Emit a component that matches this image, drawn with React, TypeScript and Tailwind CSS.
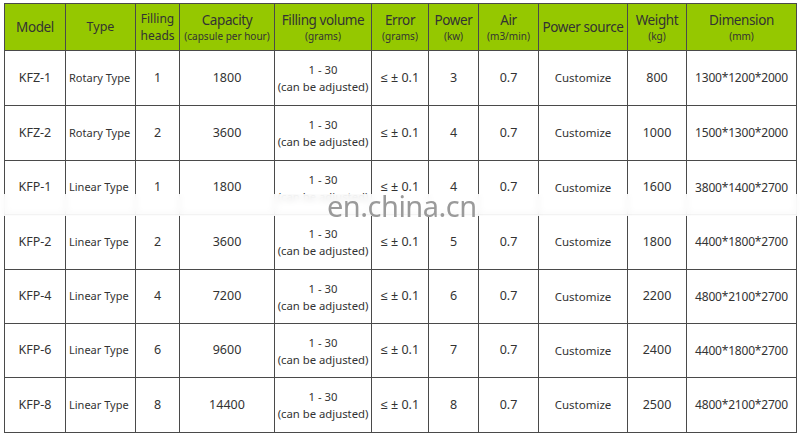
const cols = [61, 70, 44, 95, 97, 57, 50, 60, 89, 59, 110];

type Row = {
  model: string;
  type: string;
  heads: string;
  capacity: string;
  power: string;
  weight: string;
  dim: string;
  h: number;
};

const rows: Row[] = [
  { model: "KFZ-1", type: "Rotary Type", heads: "1", capacity: "1800", power: "3", weight: "800", dim: "1300*1200*2000", h: 55 },
  { model: "KFZ-2", type: "Rotary Type", heads: "2", capacity: "3600", power: "4", weight: "1000", dim: "1500*1300*2000", h: 55 },
  { model: "KFP-1", type: "Linear Type", heads: "1", capacity: "1800", power: "4", weight: "1600", dim: "3800*1400*2700", h: 54 },
  { model: "KFP-2", type: "Linear Type", heads: "2", capacity: "3600", power: "5", weight: "1800", dim: "4400*1800*2700", h: 55 },
  { model: "KFP-4", type: "Linear Type", heads: "4", capacity: "7200", power: "6", weight: "2200", dim: "4800*2100*2700", h: 54 },
  { model: "KFP-6", type: "Linear Type", heads: "6", capacity: "9600", power: "7", weight: "2400", dim: "4400*1800*2700", h: 54 },
  { model: "KFP-8", type: "Linear Type", heads: "8", capacity: "14400", power: "8", weight: "2500", dim: "4800*2100*2700", h: 55 },
];

function Head({ main, sub }: { main: string; sub?: string }) {
  return (
    <th className="border border-[#4a4a4a] p-0 font-normal text-center align-middle whitespace-nowrap">
      <div className="text-[13.5px] leading-[18px] tracking-[-0.4px]">{main}</div>
      {sub && <div className="text-[10px] leading-[14px]">{sub}</div>}
    </th>
  );
}

export default function App() {
  const td = "border border-[#4a4a4a] p-0 text-center align-middle whitespace-nowrap";
  return (
    <div className="relative w-[800px] h-[435px] bg-white overflow-hidden font-['Noto_Sans',sans-serif] text-[#333]">
      <div className="pl-[4px] pt-[3px]">
        <table className="table-fixed border-collapse w-[792px]">
          <colgroup>
            {cols.map((w, i) => (
              <col key={i} style={{ width: w }} />
            ))}
          </colgroup>
          <thead>
            <tr className="h-[47px] bg-[#95c800]">
              <Head main="Model" />
              <th className="border border-[#4a4a4a] p-0 font-normal text-[12.5px]">Type</th>
              <th className="border border-[#4a4a4a] p-0 font-normal text-[12px] leading-[17px]">
                Filling
                <br />
                heads
              </th>
              <Head main="Capacity" sub="(capsule per hour)" />
              <Head main="Filling volume" sub="(grams)" />
              <Head main="Error" sub="(grams)" />
              <Head main="Power" sub="(kw)" />
              <Head main="Air" sub="(m3/min)" />
              <Head main="Power source" />
              <Head main="Weight" sub="(kg)" />
              <Head main="Dimension" sub="(mm)" />
            </tr>
          </thead>
          <tbody>
            {rows.map((r) => (
              <tr key={r.model} className="text-[12.5px]" style={{ height: r.h }}>
                <td className={td}>{r.model}</td>
                <td className={`${td} text-[11px] text-left pl-[3px]`}>{r.type}</td>
                <td className={td}>{r.heads}</td>
                <td className={td}>{r.capacity}</td>
                <td className={`${td} text-[11.3px] leading-[17px]`}>
                  1 - 30
                  <br />
                  (can be adjusted)
                </td>
                <td className={td}>≤ ± 0.1</td>
                <td className={td}>{r.power}</td>
                <td className={td}>0.7</td>
                <td className={`${td} text-[11.5px]`}>Customize</td>
                <td className={td}>{r.weight}</td>
                <td className={`${td} text-[12px] tracking-[-0.2px]`}>{r.dim}</td>
              </tr>
            ))}
          </tbody>
        </table>
      </div>

      {/* watermark */}
      <div className="absolute left-0 right-0 top-[194px] h-[22px] bg-white/85 backdrop-blur-[3px]" />
      <div className="absolute left-[327px] top-[186px] text-[29px] leading-[40px] text-[#9a9a9a] tracking-[-0.5px]">
        en.china.cn
      </div>
    </div>
  );
}
